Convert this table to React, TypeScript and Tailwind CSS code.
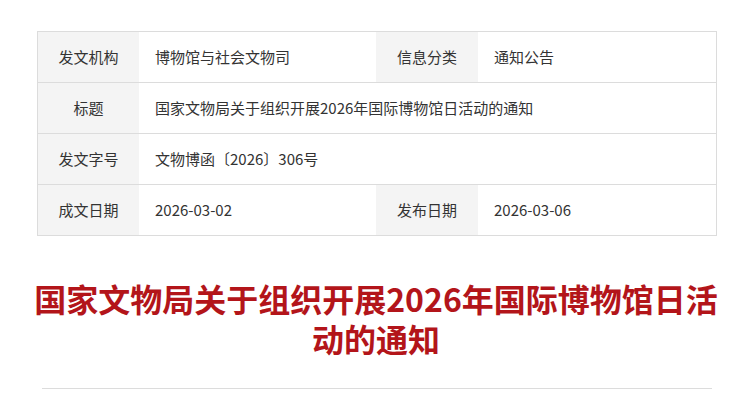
import React from "react";

const font = { fontFamily: '"Noto Sans CJK SC", "Noto Sans", sans-serif' };

const Label: React.FC<{ children: React.ReactNode; w: string }> = ({ children, w }) => (
  <div className={`${w} shrink-0 bg-[#f4f4f4] flex items-center justify-center text-[15px] text-[#333]`}>
    {children}
  </div>
);

const Value: React.FC<{ children: React.ReactNode; w?: string }> = ({ children, w = "flex-1" }) => (
  <div className={`${w} flex items-center pl-[16px] text-[15px] text-[#333] bg-white`}>{children}</div>
);

export default function App() {
  return (
    <div className="min-h-screen bg-white pt-[31px] pl-[37px]" style={font}>
      <div className="w-[680px] border border-[#dcdcdc]">
        <div className="flex h-[51px] border-b border-[#dcdcdc]">
          <Label w="w-[101px]">发文机构</Label>
          <Value w="w-[237px]">博物馆与社会文物司</Value>
          <Label w="w-[102px]">信息分类</Label>
          <Value>通知公告</Value>
        </div>
        <div className="flex h-[51px] border-b border-[#dcdcdc]">
          <Label w="w-[101px]">标题</Label>
          <Value>国家文物局关于组织开展2026年国际博物馆日活动的通知</Value>
        </div>
        <div className="flex h-[51px] border-b border-[#dcdcdc]">
          <Label w="w-[101px]">发文字号</Label>
          <Value>文物博函〔2026〕306号</Value>
        </div>
        <div className="flex h-[50px]">
          <Label w="w-[101px]">成文日期</Label>
          <Value w="w-[237px]">2026-03-02</Value>
          <Label w="w-[102px]">发布日期</Label>
          <Value>2026-03-06</Value>
        </div>
      </div>

      <div className="w-[700px] -ml-[11px] mt-[42px] text-center text-[32px] leading-[40px] font-bold text-[#b3151a]">
        国家文物局关于组织开展2026年国际博物馆日活动的通知
      </div>

      <div className="w-[670px] ml-[5px] mt-[30px] border-t border-[#dcdcdc]" />
    </div>
  );
}
